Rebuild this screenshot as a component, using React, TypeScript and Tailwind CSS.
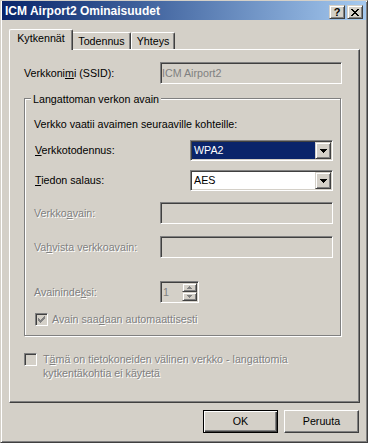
import React from "react";

const sunken =
  "border border-t-[#808080] border-l-[#808080] border-r-white border-b-white shadow-[inset_1px_1px_0_#404040,inset_-1px_-1px_0_#d4d0c8]";
const raised =
  "border border-t-white border-l-white border-r-[#404040] border-b-[#404040] shadow-[inset_-1px_-1px_0_#808080]";
const raisedCombo =
  "border border-t-[#d4d0c8] border-l-[#d4d0c8] border-r-[#404040] border-b-[#404040] shadow-[inset_1px_1px_0_#fff,inset_-1px_-1px_0_#808080]";
const disabledText = "text-[#808080] [text-shadow:1px_1px_0_#fff]";

function Pixels({ rows, color }: { rows: string[]; color: string }) {
  const rects: React.ReactNode[] = [];
  rows.forEach((r, y) =>
    r.split("").forEach((c, x) => {
      if (c === "#")
        rects.push(<rect key={`${x}-${y}`} x={x} y={y} width={1} height={1} fill={color} />);
    })
  );
  return (
    <svg width={rows[0].length} height={rows.length} shapeRendering="crispEdges" className="block">
      {rects}
    </svg>
  );
}

const CHECK = ["......#", ".....##", "#...###", "##.###.", "#####..", ".###...", "..#...."];
const DOWN = ["#######", ".#####.", "..###..", "...#..."];
const CLOSE = ["##....##", ".##..##.", "..####..", "...##...", "..####..", ".##..##.", "##....##"];
const SUP = ["..#..", ".###.", "#####"];
const SDOWN = ["#####", ".###.", "..#.."];

function Combo({ value, selected }: { value: string; selected?: boolean }) {
  return (
    <div className={`w-[143px] h-[21px] bg-white p-[1px] flex ${sunken}`}>
      <div
        className={`flex-1 flex items-center pl-[2px] ${
          selected ? "bg-[#0a246a] text-white" : "bg-white text-black"
        }`}
      >
        {value}
      </div>
      <div className={`w-[16px] h-[17px] bg-[#d4d0c8] flex items-center justify-center ${raisedCombo}`}>
        <Pixels rows={DOWN} color="#000" />
      </div>
    </div>
  );
}

function Edit({ w }: { w: string }) {
  return <div className={`${w} h-[22px] bg-[#d4d0c8] ${sunken}`} />;
}

function CheckBox({ checked }: { checked?: boolean }) {
  return (
    <div className={`w-[13px] h-[13px] shrink-0 bg-[#d4d0c8] flex items-center justify-center ${sunken}`}>
      {checked && <Pixels rows={CHECK} color="#808080" />}
    </div>
  );
}

export default function App() {
  return (
    <div className="w-[368px] h-[443px] overflow-hidden bg-[#d4d0c8] font-['Liberation_Sans',Arial,sans-serif] text-[10.7px] leading-[13px] text-black border border-t-[#d4d0c8] border-l-[#d4d0c8] border-r-[#404040] border-b-[#404040] shadow-[inset_1px_1px_0_#fff,inset_-1px_-1px_0_#808080] px-[1px] flex flex-col">
      {/* Title bar */}
      <div className="h-[19px] shrink-0 bg-linear-to-r from-[#0a246a] to-[#a6caf0] flex items-start">
        <div className="flex-1 pl-[3px] pt-[3px] text-white font-bold text-[12px] leading-[14px]">
          ICM Airport2 Ominaisuudet
        </div>
        <div className="flex gap-[2px] pr-[3px] mt-[4px]">
          <div className={`w-[16px] h-[14px] bg-[#d4d0c8] flex items-center justify-center font-bold text-[11px] leading-[12px] ${raisedCombo}`}>
            ?
          </div>
          <div className={`w-[16px] h-[14px] bg-[#d4d0c8] flex items-center justify-center ${raisedCombo}`}>
            <Pixels rows={CLOSE} color="#000" />
          </div>
        </div>
      </div>

      {/* Tabs */}
      <div className="mt-[9px] ml-[7px] h-[20px] flex items-end relative z-10">
        <div className="w-[64px] h-[21px] -mb-[1px] bg-[#d4d0c8] border-t border-l border-r border-t-white border-l-white border-r-[#404040] shadow-[inset_-1px_0_0_#808080] rounded-t-[2px] pt-[2px] text-center">
          Kytkennät
        </div>
        <div className="w-[58px] h-[17px] bg-[#d4d0c8] border-t border-r border-t-white border-r-[#404040] shadow-[inset_-1px_0_0_#808080] rounded-tr-[2px] pt-[2px] text-center">
          Todennus
        </div>
        <div className="w-[44px] h-[17px] bg-[#d4d0c8] border-t border-l border-r border-t-white border-l-white border-r-[#404040] shadow-[inset_-1px_0_0_#808080] rounded-t-[2px] pt-[2px] text-center">
          Yhteys
        </div>
      </div>

      {/* Panel */}
      <div className="ml-[7px] w-[351px] h-[354px] shrink-0 border border-t-white border-l-white border-r-[#404040] border-b-[#404040] shadow-[inset_-1px_-1px_0_#808080] pl-[14px] flex flex-col">
        <div className="mt-[12px] h-[22px] flex items-center">
          <div className="w-[136px]">
            Verkkoni<u>m</u>i (SSID):
          </div>
          <div className={`w-[182px] h-[22px] bg-[#d4d0c8] flex items-center pl-[1px] text-[#808080] ${sunken}`}>
            ICM Airport2
          </div>
        </div>

        {/* Group box */}
        <div className="mt-[14px] w-[317px] h-[238px] relative border border-[#808080] shadow-[inset_1px_1px_0_#fff,1px_1px_0_#fff] pl-[9px] pt-[19px] flex flex-col">
          <div className="absolute left-[6px] top-[-6px] px-[2px] bg-[#d4d0c8]">Langattoman verkon avain</div>
          <div className="h-[13px]">Verkko vaatii avaimen seuraaville kohteille:</div>
          <div className="mt-[9px] h-[21px] flex items-center">
            <div className="w-[156px] pl-[1px]">
              <u>V</u>erkkotodennus:
            </div>
            <Combo value="WPA2" selected />
          </div>
          <div className="mt-[9px] h-[21px] flex items-center">
            <div className="w-[156px] pl-[1px]">
              <u>T</u>iedon salaus:
            </div>
            <Combo value="AES" />
          </div>
          <div className="mt-[11px] h-[22px] flex items-center">
            <div className={`w-[126px] ${disabledText}`}>
              Verkko<u>a</u>vain:
            </div>
            <Edit w="w-[173px]" />
          </div>
          <div className="mt-[12px] h-[22px] flex items-center">
            <div className={`w-[126px] ${disabledText}`}>
              Va<u>h</u>vista verkkoavain:
            </div>
            <Edit w="w-[173px]" />
          </div>
          <div className="mt-[23px] h-[22px] flex items-center">
            <div className={`w-[126px] ${disabledText}`}>
              Avaininde<u>k</u>si:
            </div>
            <div className={`w-[39px] h-[22px] bg-[#d4d0c8] p-[1px] flex ${sunken}`}>
              <div className="flex-1 flex items-center pl-[1px] text-[#808080]">1</div>
              <div className="w-[15px] flex flex-col">
                <div className={`h-[9px] bg-[#d4d0c8] flex items-center justify-center ${raisedCombo}`}>
                  <Pixels rows={SUP} color="#808080" />
                </div>
                <div className={`h-[9px] bg-[#d4d0c8] flex items-center justify-center ${raisedCombo}`}>
                  <Pixels rows={SDOWN} color="#808080" />
                </div>
              </div>
            </div>
          </div>
          <div className="mt-[10px] h-[13px] flex items-center">
            <div className="ml-[1px]">
              <CheckBox checked />
            </div>
            <div className={`ml-[4px] ${disabledText}`}>
              Avain saa<u>d</u>aan automaattisesti
            </div>
          </div>
        </div>

        <div className="mt-[17px] flex items-start">
          <CheckBox />
          <div className={`ml-[6px] -mt-[1px] leading-[14px] ${disabledText}`}>
            T<u>ä</u>mä on tietokoneiden välinen verkko - langattomia
            <br />
            kytkentäkohtia ei käytetä
          </div>
        </div>
      </div>

      {/* Buttons */}
      <div className="mt-[7px] flex justify-end gap-[6px] pr-[7px]">
        <div className="w-[75px] h-[23px] bg-[#d4d0c8] border border-black shadow-[inset_1px_1px_0_#fff,inset_-1px_-1px_0_#404040,inset_-2px_-2px_0_#808080] flex items-center justify-center">
          OK
        </div>
        <div className={`w-[75px] h-[23px] bg-[#d4d0c8] flex items-center justify-center ${raised}`}>
          Peruuta
        </div>
      </div>
    </div>
  );
}
